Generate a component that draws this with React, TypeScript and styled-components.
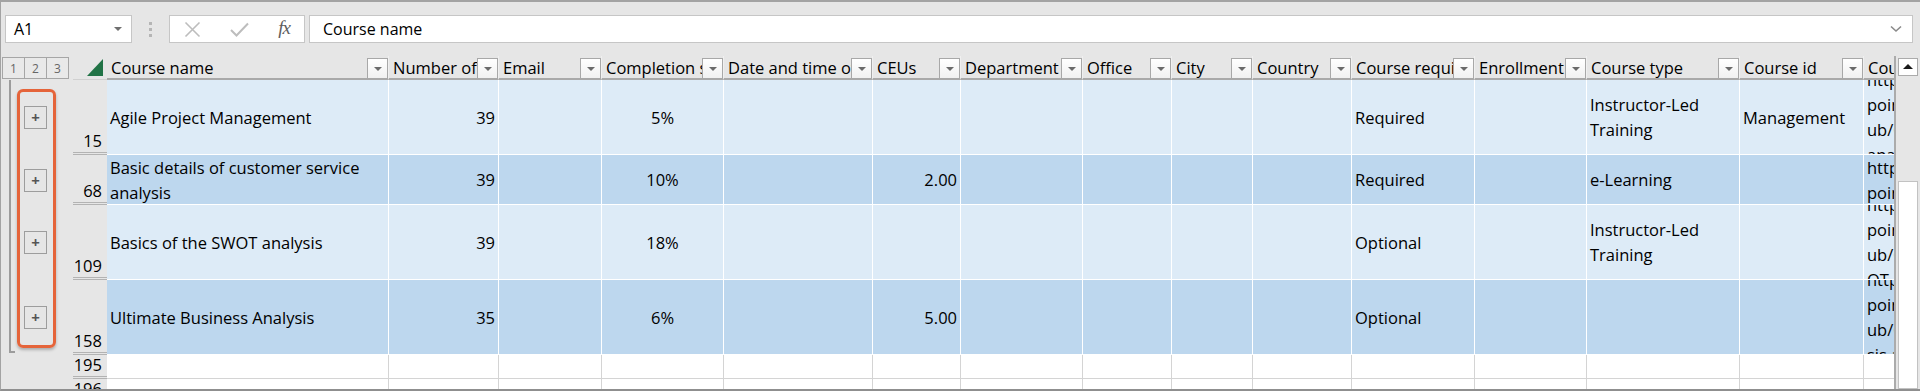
import React from "react";
import styled, { createGlobalStyle } from "styled-components";

const FONT = `"Open Sans", "Noto Sans", "DejaVu Sans", sans-serif`;

const GlobalStyle = createGlobalStyle`
  html, body {
    margin: 0;
    padding: 0;
    background: #ffffff;
  }
  body {
    font-family: ${FONT};
  }
`;

type Align = "left" | "right" | "center";

interface Column {
  title: string;
  width: number;
  align?: Align;
}

const columns: Column[] = [
  { title: "Course name", width: 282 },
  { title: "Number of attendees", width: 110, align: "right" },
  { title: "Email", width: 103 },
  { title: "Completion status", width: 122, align: "center" },
  { title: "Date and time of completion", width: 149 },
  { title: "CEUs", width: 88, align: "right" },
  { title: "Department", width: 122 },
  { title: "Office", width: 89 },
  { title: "City", width: 81 },
  { title: "Country", width: 99 },
  { title: "Course requirement", width: 123 },
  { title: "Enrollment", width: 112 },
  { title: "Course type", width: 153 },
  { title: "Course id", width: 124 },
  { title: "Course link", width: 150 },
];

interface DataRow {
  num: number;
  height: number;
  shade: "light" | "dark";
  cells: string[];
  link: string[];
}

const rows: DataRow[] = [
  {
    num: 15,
    height: 75,
    shade: "light",
    cells: ["Agile Project Management", "39", "", "5%", "", "", "", "", "", "", "Required", "", "Instructor-Led Training", "Management"],
    link: ["https://contoso.share", "point.com/sites/H", "ub/Courses/Agile-M", "anagement.aspx"],
  },
  {
    num: 68,
    height: 50,
    shade: "dark",
    cells: ["Basic details of customer service analysis", "39", "", "10%", "", "2.00", "", "", "", "", "Required", "", "e-Learning", ""],
    link: ["https://contoso.share", "point.com/sites/H"],
  },
  {
    num: 109,
    height: 75,
    shade: "light",
    cells: ["Basics of the SWOT analysis", "39", "", "18%", "", "", "", "", "", "", "Optional", "", "Instructor-Led Training", ""],
    link: ["https://contoso.share", "point.com/sites/H", "ub/Courses/Basics-SW", "OT-analysis.aspx"],
  },
  {
    num: 158,
    height: 75,
    shade: "dark",
    cells: ["Ultimate Business Analysis", "35", "", "6%", "", "5.00", "", "", "", "", "Optional", "", "", ""],
    link: ["https://contoso.share", "point.com/sites/H", "ub/Courses/Ultimate-Analy", "sis.aspx"],
  },
];

const blankRows = [195, 196];
const groupHeight = rows.reduce((sum, r) => sum + r.height, 0);

/* ---------- window + formula bar ---------- */

const Window = styled.div`
  width: 1920px;
  height: 391px;
  box-sizing: border-box;
  display: flex;
  flex-direction: column;
  overflow: hidden;
  background: #e6e6e6;
  border-top: 2px solid #a3a3a3;
  border-left: 1px solid #a3a3a3;
  border-bottom: 2px solid #8f8f8f;
  font-family: ${FONT};
  color: #000;
`;

const FormulaBar = styled.div`
  height: 54px;
  flex: none;
  box-sizing: border-box;
  display: flex;
  align-items: flex-start;
  padding: 13px 7px 0 4px;
`;

const InputBox = styled.div`
  height: 28px;
  box-sizing: border-box;
  display: flex;
  align-items: center;
  background: #ffffff;
  border: 1px solid #c6c6c6;
  font-size: 16px;
`;

const NameBox = styled(InputBox)`
  width: 127px;
  padding: 0 9px 0 8px;
  justify-content: space-between;
`;

const Caret = styled.span`
  width: 0;
  height: 0;
  border-left: 4px solid transparent;
  border-right: 4px solid transparent;
  border-top: 4px solid #6f6f6f;
`;

const Grip = styled.div`
  width: 37px;
  height: 28px;
  display: flex;
  flex-direction: column;
  align-items: center;
  justify-content: center;
  gap: 3px;

  span {
    width: 3px;
    height: 3px;
    background: #b5b5b5;
  }
`;

const FxBox = styled(InputBox)`
  width: 136px;
  padding: 0 14px 0 14px;
  justify-content: space-between;
`;

const Fx = styled.span`
  font-family: "Liberation Serif", "DejaVu Serif", serif;
  font-style: italic;
  font-size: 19px;
  color: #5e5e5e;
  letter-spacing: -1px;
  margin-top: -2px;
`;

const FormulaInput = styled(InputBox)`
  flex: 1;
  margin-left: 4px;
  padding: 0 10px 0 13px;
  justify-content: space-between;
`;

/* ---------- sheet ---------- */

const Sheet = styled.div`
  flex: 1;
  display: flex;
  min-height: 0;
  overflow: hidden;
`;

const OutlinePane = styled.div`
  width: 72px;
  flex: none;
  display: flex;
  flex-direction: column;
`;

const LevelBar = styled.div`
  height: 24px;
  display: flex;
  padding: 1px 0 0 1px;
  box-sizing: border-box;
`;

const LevelButton = styled.div`
  width: 23px;
  height: 22px;
  box-sizing: border-box;
  margin-right: -1px;
  border: 1px solid #a6a6a6;
  display: flex;
  align-items: center;
  justify-content: center;
  font-size: 12px;
  color: #666666;
  background: #e9e9e9;
`;

const OutlineBody = styled.div`
  display: flex;
  align-items: flex-start;
`;

const Bracket = styled.div`
  width: 6px;
  margin-left: 8px;
  box-sizing: border-box;
  border-left: 2px solid #9c9c9c;
  border-bottom: 2px solid #9c9c9c;
`;

const PlusColumn = styled.div`
  position: relative;
  width: 39px;
  margin-left: 2px;
  display: flex;
  flex-direction: column;
`;

const Highlight = styled.div`
  position: absolute;
  left: 0;
  right: 0;
  top: 9px;
  bottom: 7px;
  border: 3px solid #e5643a;
  border-radius: 6px;
  box-shadow: 0 2px 3px rgba(0, 0, 0, 0.25);
  pointer-events: none;
`;

const PlusSlot = styled.div<{ $h: number }>`
  height: ${(p) => p.$h}px;
  display: flex;
  align-items: center;
  padding-left: 7px;
`;

const PlusButton = styled.div`
  width: 23px;
  height: 23px;
  box-sizing: border-box;
  border: 1px solid #9d9d9d;
  display: flex;
  align-items: center;
  justify-content: center;
  font-size: 15px;
  font-weight: 700;
  color: #555555;
  line-height: 1;
`;

const RowHeaders = styled.div`
  width: 34px;
  flex: none;
  display: flex;
  flex-direction: column;
`;

const Corner = styled.div`
  height: 24px;
  flex: none;
  box-sizing: border-box;
  display: flex;
  align-items: flex-end;
  justify-content: flex-end;
  padding: 0 4px 3px 0;
  border-bottom: 1px solid #d0d0d0;
`;

const RowNumber = styled.div<{ $h: number }>`
  height: ${(p) => p.$h}px;
  flex: none;
  box-sizing: border-box;
  display: flex;
  align-items: flex-end;
  justify-content: flex-end;
  padding: 0 5px 1px 0;
  border-bottom: 3px double #b3b3b3;
  font-size: 16.5px;
  line-height: 21px;
`;

const Grid = styled.div`
  flex: 1;
  min-width: 0;
  overflow: hidden;
  display: flex;
  flex-direction: column;
`;

const Row = styled.div<{ $h: number }>`
  height: ${(p) => p.$h}px;
  flex: none;
  display: flex;
`;

const HeaderCell = styled.div<{ $w: number }>`
  width: ${(p) => p.$w}px;
  flex: none;
  height: 24px;
  box-sizing: border-box;
  display: flex;
  align-items: flex-end;
  border-right: 1px solid #f0f0f0;
  border-bottom: 2px solid #a9a9a9;
  font-size: 16.5px;
`;

const HeaderText = styled.span`
  flex: 1;
  min-width: 0;
  overflow: hidden;
  white-space: nowrap;
  padding: 0 0 0 4px;
  line-height: 21px;
`;

const FilterButton = styled.div`
  width: 21px;
  height: 21px;
  flex: none;
  box-sizing: border-box;
  margin-bottom: -1px;
  border: 1px solid #a8a8a8;
  background: linear-gradient(#ffffff, #f1f1f1);
  display: flex;
  align-items: center;
  justify-content: center;

  &::after {
    content: "";
    border-left: 4px solid transparent;
    border-right: 4px solid transparent;
    border-top: 4px solid #6a6a6a;
  }
`;

const shades = {
  light: "#ddebf7",
  dark: "#bdd7ee",
  blank: "#ffffff",
};

const Cell = styled.div<{ $w: number; $align?: Align; $shade: keyof typeof shades }>`
  width: ${(p) => p.$w}px;
  flex: none;
  box-sizing: border-box;
  display: flex;
  align-items: center;
  justify-content: ${(p) =>
    p.$align === "right" ? "flex-end" : p.$align === "center" ? "center" : "flex-start"};
  text-align: ${(p) => p.$align ?? "left"};
  padding: 0 3px 0 3px;
  overflow: hidden;
  background: ${(p) => shades[p.$shade]};
  border-right: 1px solid ${(p) => (p.$shade === "blank" ? "#d4d4d4" : "#ffffff")};
  border-bottom: 1px solid ${(p) => (p.$shade === "blank" ? "#d4d4d4" : "#ffffff")};
  font-size: 16.5px;
  line-height: 25px;
`;

const LinkCell = styled(Cell)`
  flex-direction: column;
  align-items: flex-start;
  justify-content: center;
  white-space: nowrap;
`;

const Scrollbar = styled.div`
  width: 26px;
  flex: none;
  box-sizing: border-box;
  border-left: 2px solid #ababab;
  padding: 2px 0 0 2px;
  display: flex;
  flex-direction: column;
`;

const ScrollButton = styled.div`
  width: 20px;
  height: 20px;
  box-sizing: border-box;
  background: #ffffff;
  border: 1px solid #ababab;
  display: flex;
  align-items: center;
  justify-content: center;

  &::after {
    content: "";
    border-left: 5px solid transparent;
    border-right: 5px solid transparent;
    border-bottom: 5px solid #1a1a1a;
  }
`;

const Thumb = styled.div`
  width: 20px;
  height: 240px;
  margin-top: 105px;
  box-sizing: border-box;
  background: #ffffff;
  border: 1px solid #c2c2c2;
`;

const Icon = styled.svg`
  display: block;
`;

export default function App() {
  return (
    <>
      <GlobalStyle />
      <Window>
        <FormulaBar>
          <NameBox>
            <span>A1</span>
            <Caret />
          </NameBox>
          <Grip>
            <span />
            <span />
            <span />
          </Grip>
          <FxBox>
            <Icon width="17" height="17" viewBox="0 0 17 17">
              <path d="M1.5 1.5 L15.5 15.5 M15.5 1.5 L1.5 15.5" stroke="#bdbdbd" strokeWidth="1.6" fill="none" />
            </Icon>
            <Icon width="19" height="15" viewBox="0 0 19 15">
              <path d="M1 8 L6.5 13.5 L18 1.5" stroke="#bdbdbd" strokeWidth="2" fill="none" />
            </Icon>
            <Fx>fx</Fx>
          </FxBox>
          <FormulaInput>
            <span>Course name</span>
            <Icon width="12" height="8" viewBox="0 0 12 8">
              <path d="M1 1.5 L6 6 L11 1.5" stroke="#8a8a8a" strokeWidth="1.6" fill="none" />
            </Icon>
          </FormulaInput>
        </FormulaBar>

        <Sheet>
          <OutlinePane>
            <LevelBar>
              <LevelButton>1</LevelButton>
              <LevelButton>2</LevelButton>
              <LevelButton>3</LevelButton>
            </LevelBar>
            <OutlineBody>
              <Bracket style={{ height: groupHeight - 2 }} />
              <PlusColumn>
                <Highlight />
                {rows.map((r) => (
                  <PlusSlot key={r.num} $h={r.height}>
                    <PlusButton>+</PlusButton>
                  </PlusSlot>
                ))}
              </PlusColumn>
            </OutlineBody>
          </OutlinePane>

          <RowHeaders>
            <Corner>
              <Icon width="16" height="17" viewBox="0 0 16 17">
                <polygon points="16,0 16,17 0,17" fill="#217346" />
              </Icon>
            </Corner>
            {rows.map((r) => (
              <RowNumber key={r.num} $h={r.height}>
                {r.num}
              </RowNumber>
            ))}
            {blankRows.map((n) => (
              <RowNumber key={n} $h={24}>
                {n}
              </RowNumber>
            ))}
          </RowHeaders>

          <Grid>
            <Row $h={24}>
              {columns.map((c) => (
                <HeaderCell key={c.title} $w={c.width}>
                  <HeaderText>{c.title}</HeaderText>
                  <FilterButton />
                </HeaderCell>
              ))}
            </Row>
            {rows.map((r) => (
              <Row key={r.num} $h={r.height}>
                {r.cells.map((text, i) => (
                  <Cell key={i} $w={columns[i].width} $align={columns[i].align} $shade={r.shade}>
                    {text}
                  </Cell>
                ))}
                <LinkCell $w={columns[14].width} $shade={r.shade}>
                  {r.link.map((line) => (
                    <div key={line}>{line}</div>
                  ))}
                </LinkCell>
              </Row>
            ))}
            {blankRows.map((n) => (
              <Row key={n} $h={24}>
                {columns.map((c) => (
                  <Cell key={c.title} $w={c.width} $shade="blank" />
                ))}
              </Row>
            ))}
          </Grid>

          <Scrollbar>
            <ScrollButton />
            <Thumb />
          </Scrollbar>
        </Sheet>
      </Window>
    </>
  );
}
